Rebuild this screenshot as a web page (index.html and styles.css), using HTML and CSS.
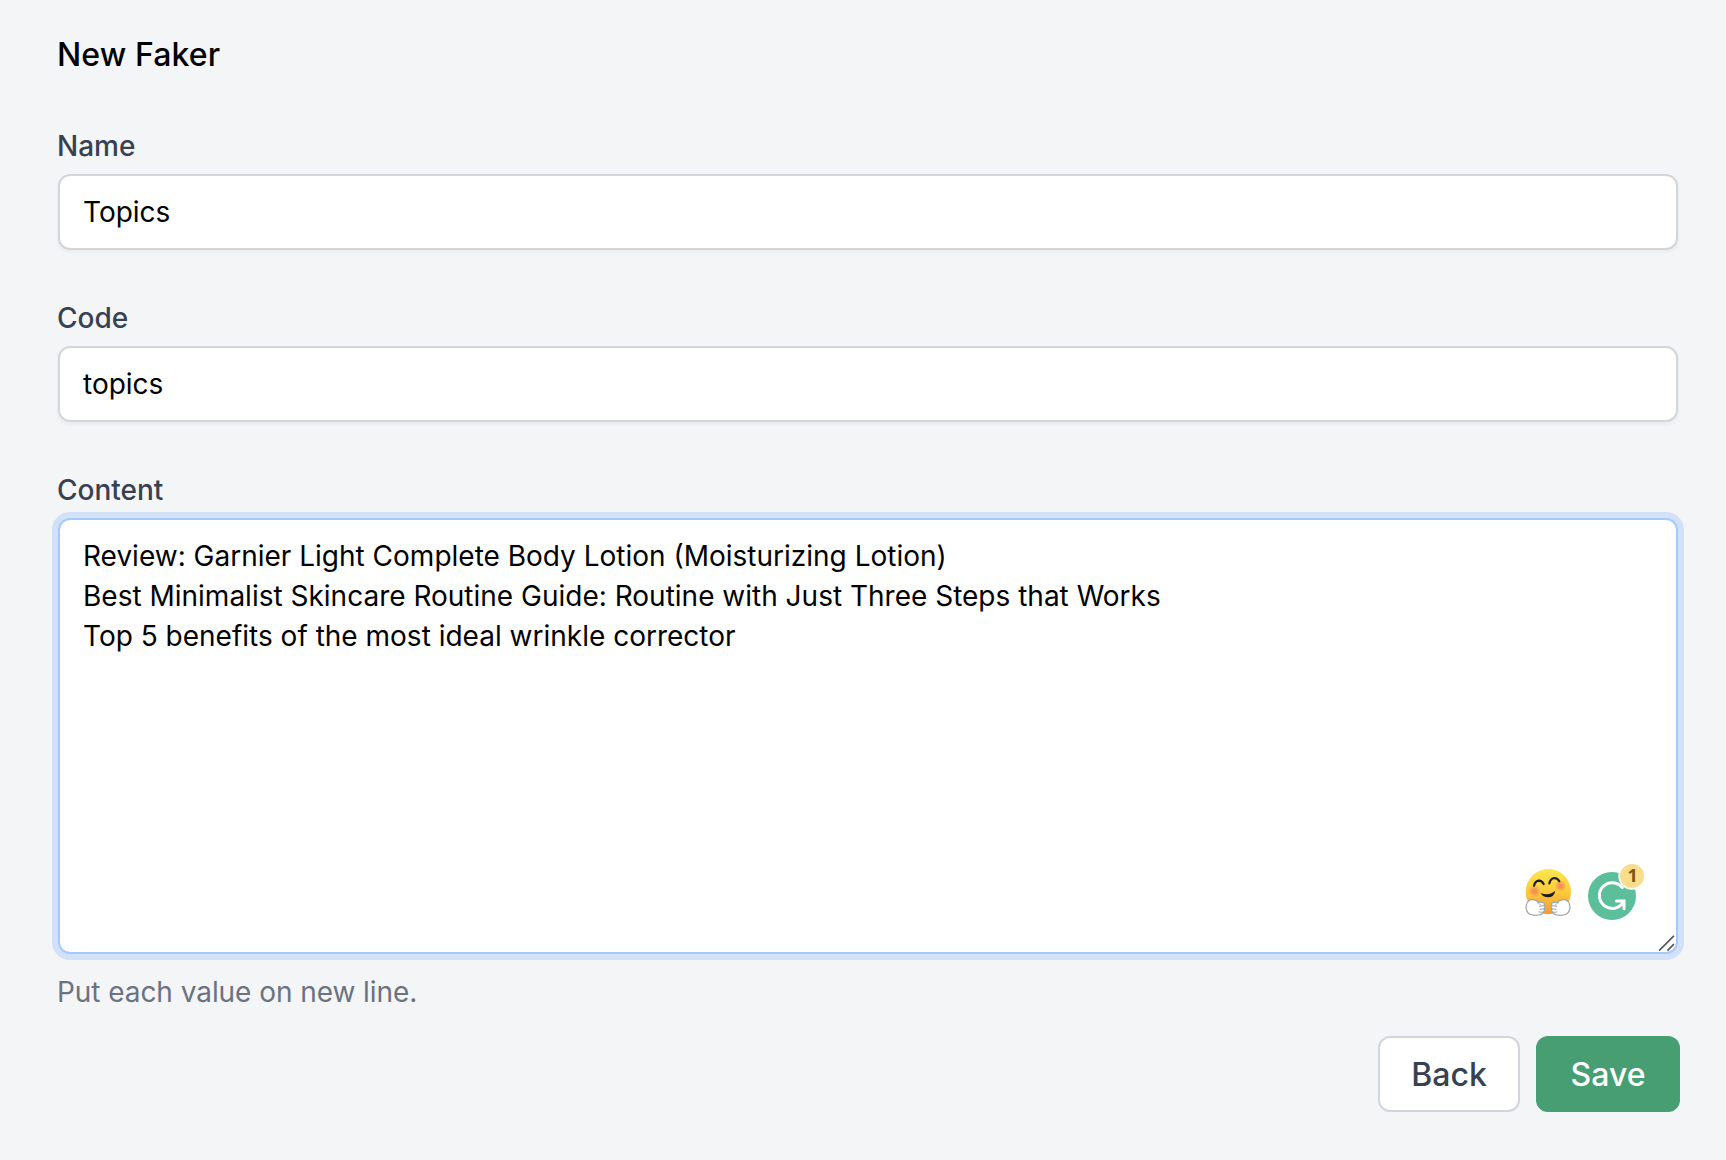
FILE: index.html
```html
<!DOCTYPE html>
<html lang="en">
<head>
<meta charset="utf-8">
<title>New Faker</title>
<link rel="stylesheet" href="styles.css">
</head>
<body>
<form class="form">
  <h1 class="title">New Faker</h1>
  <div class="field">
    <label class="label" for="name">Name</label>
    <input class="control" id="name" type="text" value="Topics">
  </div>
  <div class="field">
    <label class="label" for="code">Code</label>
    <input class="control" id="code" type="text" value="topics">
  </div>
  <div class="field">
    <label class="label" for="content">Content</label>
    <div class="area-wrap">
      <textarea class="control area" id="content" spellcheck="false">Review: Garnier Light Complete Body Lotion (Moisturizing Lotion)
Best Minimalist Skincare Routine Guide: Routine with Just Three Steps that Works
Top 5 benefits of the most ideal wrinkle corrector</textarea>
      <svg class="widgets" viewBox="24 0 480 312" aria-hidden="true">
        <defs>
          <linearGradient id="face" x1="0" y1="0" x2="0" y2="1">
            <stop offset="0" stop-color="#fbe74f"/>
            <stop offset=".5" stop-color="#fdcb3b"/>
            <stop offset="1" stop-color="#f19a35"/>
          </linearGradient>
          <radialGradient id="blush">
            <stop offset="0" stop-color="#f2705f" stop-opacity=".75"/>
            <stop offset=".5" stop-color="#f2765f" stop-opacity=".5"/>
            <stop offset="1" stop-color="#f2765f" stop-opacity="0"/>
          </radialGradient>
        </defs>
        <!-- hugging face -->
        <circle cx="115" cy="125" r="68" fill="url(#face)"/>
        <circle cx="73" cy="123" r="18" fill="url(#blush)"/>
        <circle cx="152" cy="108" r="18" fill="url(#blush)"/>
        <path d="M72 107Q75 93 87 92Q96 92 101 102M118 100Q121 86 132 84Q143 84 148 94" fill="none" stroke="#1d1c22" stroke-width="6.5" stroke-linecap="round"/>
        <path d="M92 129Q116 139 136 122Q132 142 114 142Q99 142 92 129Z" fill="#1d1c22"/>
        <g id="hand" stroke-linecap="round" stroke-linejoin="round">
          <path d="M84 158C82 150 74 149 66 149C56 149 48 158 48 172C48 189 57 196 76 196C92 196 99 193 99 187C104 184 104 180 102 177C106 173 105 168 102 166C105 161 102 157 97 157C92 156 86 156 84 158Z" fill="#fff" stroke="#9ba6ad" stroke-width="3.5"/>
          <path d="M84 158C87 160 90 162 92 165M101 167L88 169M102 177L90 178M98 187L88 186" fill="none" stroke="#9ba6ad" stroke-width="3"/>
        </g>
        <use href="#hand" transform="translate(228 0) scale(-1 1)"/>
        <!-- writing assistant -->
        <circle cx="306" cy="138" r="72" fill="#5bbf9c"/>
        <path d="M337 113A38.500 38.500 0 1 0 340 156" fill="none" stroke="#fff" stroke-width="9" stroke-linecap="round"/>
        <path d="M319 153H342V176" fill="none" stroke="#fff" stroke-width="9" stroke-linecap="round"/>
        <circle cx="366" cy="78" r="41" fill="#fff"/>
        <circle cx="366" cy="78" r="36" fill="#f8dd8b"/>
        <text class="count" x="368" y="96" text-anchor="middle">1</text>
        <path d="M449 300L490 259M474 300L490 284" stroke="#555" stroke-width="5" stroke-linecap="square"/>
      </svg>
    </div>
    <p class="hint">Put each value on new line.</p>
  </div>
  <div class="actions">
    <button class="btn btn-back" type="button">Back</button>
    <button class="btn btn-save" type="button">Save</button>
  </div>
</form>
</body>
</html>
```
FILE: styles.css
```css
* {
  box-sizing: border-box;
}

body {
  margin: 0;
  background: #f4f5f7;
  color: #000;
  font-family: Inter, "Liberation Sans", sans-serif;
  font-size: 28px;
  line-height: 40px;
}

.form {
  display: flex;
  flex-direction: column;
  padding: 31px 46px 0 57px;
}

.title {
  margin: 0 0 47px;
  font-size: 32px;
  font-weight: 500;
  line-height: 48px;
  letter-spacing: .1px;
}

.field {
  display: flex;
  flex-direction: column;
  margin-bottom: 48px;
}

.field:nth-of-type(3) {
  margin-bottom: 24px;
}

.label {
  margin-bottom: 8px;
  color: #374151;
  font-weight: 500;
}

.control {
  display: block;
  width: 1620px;
  height: 76px;
  margin: 0 0 0 1px;
  padding: 16px 23px;
  border: 2px solid #d2d6dc;
  border-radius: 12px;
  outline: none;
  background: #fff;
  box-shadow: 0 2px 4px rgba(0, 0, 0, .05);
  color: #000;
  font: inherit;
}

.area-wrap {
  position: relative;
  width: 1621px;
}

.area {
  height: 436px;
  border-color: #a4cafe;
  box-shadow: 0 0 0 6px #d3e1f8;
  overflow: hidden;
  resize: none;
}

.widgets {
  position: absolute;
  right: 0;
  bottom: 0;
  width: 160px;
  height: 104px;
}

.count {
  fill: #805418;
  font: 700 54px "Open Sans", sans-serif;
}

.hint {
  margin: 18px 0 0;
  color: #6b7280;
  letter-spacing: -.06px;
}

.actions {
  display: flex;
  justify-content: flex-end;
  gap: 16px;
}

.btn {
  width: 144px;
  height: 76px;
  padding: 2px 0 0;
  border: 2px solid #489e73;
  border-radius: 12px;
  background: #489e73;
  color: #fff;
  font: 500 32px/48px Inter, "Liberation Sans", sans-serif;
}

.btn-back {
  width: 142px;
  border-color: #d2d6dc;
  background: #fff;
  color: #374151;
}
```
